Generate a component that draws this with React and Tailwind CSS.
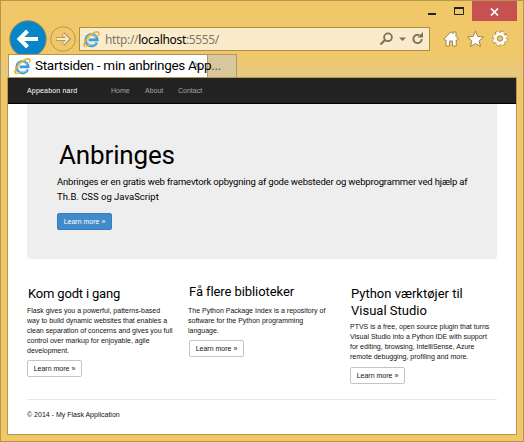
import React from "react";

function IELogo({ className }) {
  return (
    <svg viewBox="0 0 18 18" className={className} fill="none">
      <path d="M14.6 12.2A6.1 6.1 0 1 1 15.1 9.4H6" stroke="#3a9bd6" strokeWidth="2.800" />
      <path d="M14 12.4A5.6 5.6 0 0 1 4 11M4.2 7.4A5.5 5.5 0 0 1 14 7.2" stroke="#86d5f6" strokeWidth="1.200" />
      <path d="M2.8 16.3C.2 16.8.6 12.4 4.300 7.700C8.200 2.800 14.400-.2 16.300 1.500C17.100 2.300 16.800 3.800 16.200 5" stroke="#eeb52d" strokeWidth="1.800" />
      <path d="M2.800 16.300C4.200 16.500 5.800 15.500 7 14.600" stroke="#eeb52d" strokeWidth="1.400" />
    </svg>
  );
}

function TitleBar() {
  return (
    <div className="flex h-5 justify-end pr-[6px]">
      <svg className="h-5 w-[44px]" viewBox="0 0 44 20" fill="none">
        <path d="M0 13h8" stroke="#222" strokeWidth="2" />
        <path d="M26.500 7v6.500h9V7" stroke="#222" />
        <path d="M26 7h10" stroke="#222" strokeWidth="2" />
      </svg>
      <div className="flex w-[45px] items-center justify-center bg-[#c75050]">
        <svg className="mt-[2px] h-2 w-[9px]" viewBox="0 0 9 8">
          <path d="M1 .5l7 7M8 .5l-7 7" stroke="#fff" strokeWidth="1.700" />
        </svg>
      </div>
    </div>
  );
}

function AddressRow() {
  return (
    <div className="flex h-[33px] items-start pl-2">
      <svg className="-mt-px h-[38px] w-[38px] shrink-0" viewBox="0 0 38 38">
        <circle cx="19" cy="19" r="18.200" fill="#0785c6" stroke="#8f8560" strokeWidth="1" />
        <path d="M29 19H12M18.500 11l-8 8 8 8" fill="none" stroke="#fff" strokeWidth="4" />
      </svg>
      <svg className="ml-[3px] mt-[5px] h-[26px] w-[26px] shrink-0" viewBox="0 0 26 26" fill="none">
        <circle cx="13" cy="13" r="12.300" stroke="#b99650" />
        <path d="M6 13h12M13 7.500l5.500 5.500-5.500 5.500" stroke="#a98c50" strokeWidth="3.600" />
        <path d="M6.500 13h11M13.200 8l5 5-5 5" stroke="#fae9c8" strokeWidth="1.800" />
      </svg>
      <div className="ml-[3px] mt-[6px] flex h-6 w-[351px] shrink-0 items-center border border-[#ad8d48] bg-[#faebcb] pl-[3px]">
        <IELogo className="h-[17px] w-[17px]" />
        <span className="ml-[5px] mt-px whitespace-nowrap font-['Noto_Sans',sans-serif] text-[12px] leading-none tracking-[-0.340px] text-[#81796a]">
          http://<span className="text-black">localhost</span>:5555/
        </span>
        <svg className="ml-auto mr-[4px] h-4 w-[46px]" viewBox="0 0 46 16" fill="none" stroke="#7b7059">
          <circle cx="9" cy="6.300" r="3.900" strokeWidth="1.800" />
          <path d="M6 9l-4.500 4.500" strokeWidth="2.200" />
          <path d="M20 6.500h7l-3.500 3.500z" fill="#7b7059" stroke="none" />
          <path d="M42.800 8a4.200 4.200 0 1 1-2.500-3.900" strokeWidth="1.900" />
          <path d="M38.500 6.500H44V1z" fill="#7b7059" stroke="none" />
        </svg>
      </div>
      <svg className="ml-[13px] mt-[9px] h-[18px] w-[66px] shrink-0" viewBox="0 0 66 18" fill="#fff" stroke="#a08448" strokeWidth="1" strokeLinejoin="round">
        <path d="M.8 9L8 1.700l2 2V2h3v4.500L15.500 9 14 10.500l-.8-.7V16H9.500v-5h-3v5H3V9.800l-.7.700z" />
        <path d="M32.500 1l2.300 5.400 5.700.6-4.300 3.900 1.300 5.700-5-3-5 3 1.300-5.700-4.300-3.900 5.700-.6z" />
        <circle cx="57" cy="8.500" r="6.600" stroke="#a08448" strokeWidth="2.600" strokeDasharray="3.300 1.880" fill="none" />
        <circle cx="57" cy="8.500" r="6.300" stroke="#fff" strokeWidth="2" strokeDasharray="2.400 2.548" strokeDashoffset="-.4" fill="none" />
        <circle cx="57" cy="8.500" r="4.200" fill="none" stroke="#fff" strokeWidth="2.900" />
        <circle cx="57" cy="8.500" r="2.700" fill="#f0c869" />
      </svg>
    </div>
  );
}

function TabStrip() {
  return (
    <div className="flex h-[23px] bg-linear-to-b from-[#f0c869] to-[#e5c883] pl-[7px]">
      <div className="relative z-10 flex w-[199px] items-center border-l border-t border-[#b39450] bg-white pl-[5px]">
        <svg className="absolute left-[185px] top-[7px] h-[7px] w-[7px]" viewBox="0 0 7 7" stroke="#aaa" strokeWidth="1.600">
          <path d="M.5.5l6 6M6.500.5l-6 6" />
        </svg>
        <IELogo className="h-[17px] w-[17px] shrink-0" />
        <span className="relative ml-[4px] whitespace-nowrap font-[Roboto,sans-serif] text-[13.500px] leading-none tracking-[-0.280px] text-black">
          Startsiden - min anbringes App<span className="text-[#5b5647]">...</span>
        </span>
      </div>
      <div className="w-[30px] border border-b-0 border-[#b39a60] bg-[#d8c69c]" />
    </div>
  );
}

function LearnMore({ primary }) {
  return (
    <a className={(primary ? "border-[#357ebd] bg-[#428bca] text-white" : "border-[#c4c4c4] bg-white text-[#111]") + " flex h-[17px] w-[55px] items-center justify-center whitespace-nowrap rounded-[2px] border text-[7px] leading-none"}>
      Learn more »
    </a>
  );
}

function Column({ className, title, titleClass, lines, bodyClass, buttonClass }) {
  return (
    <div className={className + " shrink-0"}>
      <h2 className={titleClass + " whitespace-nowrap font-[Roboto,sans-serif] text-[13px] leading-[17px] text-black"}>
        {title.map((t) => <span key={t} className="block">{t}</span>)}
      </h2>
      <p className={bodyClass + " whitespace-nowrap text-[7px] leading-[10px] text-[#111]"}>
        {lines.map((l) => <span key={l} className="block">{l}</span>)}
      </p>
      <div className={buttonClass}><LearnMore /></div>
    </div>
  );
}

export default function App() {
  return (
    <div className="flex h-[442px] w-[524px] flex-col overflow-hidden border border-[#b6964b] bg-[#f0c869] font-['Liberation_Sans',Arial,sans-serif]">
      <TitleBar />
      <AddressRow />
      <TabStrip />
      <div className="ml-[6px] h-[358px] w-[510px] border border-[#b6964b] bg-white">
        <nav className="flex h-[26px] items-center border-b border-black bg-[#222] pl-[19px] text-[7px] leading-none text-[#a5a5a5]">
          <span className="w-[84px] whitespace-nowrap tracking-[0.180px] text-white">Appeabon nard</span>
          <span className="w-[34px]">Home</span>
          <span className="w-[33px]">About</span>
          <span>Contact</span>
        </nav>
        <main className="pl-[19px]">
          <section className="h-[155px] w-[470px] rounded-b-[3px] bg-[#eee] pl-[30px] pt-[35px]">
            <h1 className="ml-[2px] font-[Roboto,sans-serif] text-[26px] leading-[32px] tracking-[-0.150px] text-black">Anbringes</h1>
            <p className="mt-[3px] whitespace-nowrap font-[Roboto,sans-serif] text-[9.500px] leading-[15px] text-black">
              <span className="block tracking-[-0.170px]">Anbringes er en gratis web framevtork opbygning af gode websteder og webprogrammer ved hjælp af</span>
              <span className="block">Th.B. CSS og JavaScript</span>
            </p>
            <div className="mt-[9px]"><LearnMore primary /></div>
          </section>
          <section className="flex h-[141px] w-[470px] items-start border-b border-[#e8e8e8] pt-[26px]">
            <Column className="w-[161px]" titleClass="ml-px tracking-[-0.180px]" bodyClass="mt-[4px]" buttonClass="mt-[4px]" title={["Kom godt i gang"]}
              lines={["Flask gives you a powerful, patterns-based", "way to build dynamic websites that enables a", "clean separation of concerns and gives you full", "control over markup for enjoyable, agile", "development."]} />
            <Column className="-mt-[2px] w-[162px]" titleClass="ml-px tracking-[-0.080px]" bodyClass="mt-[6px]" buttonClass="mt-[4px] ml-px" title={["Få flere biblioteker"]}
              lines={["The Python Package Index is a repository of", "software for the Python programming", "language."]} />
            <Column className="w-[140px]" titleClass="ml-px" bodyClass="mt-[3px]" buttonClass="mt-[5px]" title={["Python værktøjer til", "Visual Studio"]}
              lines={["PTVS is a free, open source plugin that turns", "Visual Studio into a Python IDE with support", "for editing, browsing, IntelliSense, Azure", "remote debugging, profiling and more."]} />
          </section>
          <footer className="mt-[11px] text-[7px] leading-[8px] text-[#111]">© 2014 - My Flask Application</footer>
        </main>
      </div>
    </div>
  );
}
